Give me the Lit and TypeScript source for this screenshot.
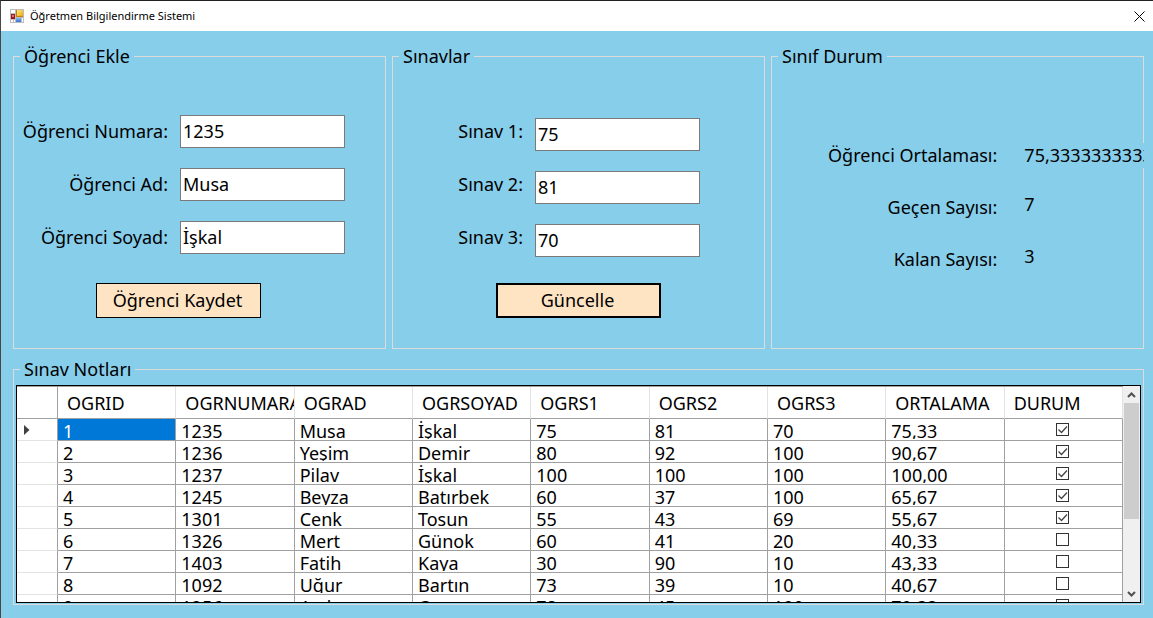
import { LitElement, html, css, svg } from "lit";
import { customElement, property } from "lit/decorators.js";
import { classMap } from "lit/directives/class-map.js";

interface Student {
  id: number;
  no: string;
  ad: string;
  soyad: string;
  s1: number;
  s2: number;
  s3: number;
  ort: string;
  durum: boolean;
}

const student = (
  id: number, no: string, ad: string, soyad: string,
  s1: number, s2: number, s3: number, ort: string, durum: boolean
): Student => ({ id, no, ad, soyad, s1, s2, s3, ort, durum });

const STUDENTS: Student[] = [
  student(1, "1235", "Musa", "İşkal", 75, 81, 70, "75,33", true),
  student(2, "1236", "Yeşim", "Demir", 80, 92, 100, "90,67", true),
  student(3, "1237", "Pilav", "İşkal", 100, 100, 100, "100,00", true),
  student(4, "1245", "Beyza", "Batırbek", 60, 37, 100, "65,67", true),
  student(5, "1301", "Cenk", "Tosun", 55, 43, 69, "55,67", true),
  student(6, "1326", "Mert", "Günok", 60, 41, 20, "40,33", false),
  student(7, "1403", "Fatih", "Kaya", 30, 90, 10, "43,33", false),
  student(8, "1092", "Uğur", "Bartın", 73, 39, 10, "40,67", false),
  student(9, "1256", "Aydan", "Can", 78, 45, 100, "70,33", true),
];

const HEADERS = ["OGRID", "OGRNUMARA", "OGRAD", "OGRSOYAD", "OGRS1", "OGRS2", "OGRS3", "ORTALAMA", "DURUM"];

@customElement("title-bar")
export class TitleBar extends LitElement {
  @property() heading = "";

  static styles = css`
    :host {
      display: flex;
      align-items: center;
      gap: 6px;
      height: 30px;
      padding-left: 9px;
      background: #fff;
      font-size: 11px;
      flex: none;
    }
    .name { flex: 1; margin: 0; font: inherit; line-height: 16px; }
    .close {
      width: 27px;
      height: 28px;
      padding: 0;
      border: 0;
      background: none;
      display: grid;
      place-items: center;
    }
    svg { display: block; }
  `;

  render() {
    return html`
      <svg width="14" height="14" viewBox="0 0 14 14" aria-hidden="true">
        <defs>
          <linearGradient id="y" x1="0" y1="0" x2="1" y2="1">
            <stop offset="0" stop-color="#ffe98a" /><stop offset="1" stop-color="#eea800" />
          </linearGradient>
          <linearGradient id="b" x1="0" y1="0" x2="0" y2="1">
            <stop offset="0" stop-color="#8ab8f4" /><stop offset="1" stop-color="#2f6fd6" />
          </linearGradient>
        </defs>
        <rect width="14" height="14" fill="#bdbdbd" />
        <path fill="#fff" d="M1 1h4v3H1zM1 11h2v2H1zM4 11h1v2H4zM12 9h1v4h-1z" />
        <rect x="1" y="5" width="4" height="5" fill="#9c1c1c" />
        <rect x="2" y="6" width="2" height="2" fill="#e07070" />
        <rect x="6" y="1" width="7" height="7" fill="#b98310" />
        <rect x="7" y="1" width="6" height="6" fill="url(#y)" />
        <rect x="6" y="9" width="5" height="4" fill="url(#b)" />
      </svg>
      <h1 class="name">${this.heading}</h1>
      <button class="close" aria-label="Kapat">
        <svg width="11" height="11" viewBox="0 0 11 11">
          <path d="M.5 .5l10 10M10.5 .5l-10 10" stroke="#000" stroke-width="1" fill="none" />
        </svg>
      </button>
    `;
  }
}

@customElement("grade-grid")
export class GradeGrid extends LitElement {
  @property({ attribute: false }) rows: Student[] = [];

  static styles = css`
    :host {
      display: flex;
      min-width: 0;
      min-height: 0;
      border: 1px solid #000;
      background: #fff;
      overflow: hidden;
    }
    .view {
      flex: 1;
      min-width: 0;
      overflow: hidden;
      border-top: 1px solid #a0a0a0;
    }
    table {
      width: 100%;
      table-layout: fixed;
      border-collapse: separate;
      border-spacing: 0;
    }
    .rowhead { width: 41px; }
    th, td {
      padding: 0;
      font-weight: 400;
      text-align: left;
      vertical-align: top;
      border-right: 1px solid #a0a0a0;
      border-bottom: 1px solid #a0a0a0;
    }
    thead th { border-right-color: #e3e3e3; }
    thead .corner { border-right-color: #a0a0a0; }
    tbody th { border-bottom-color: #e3e3e3; }
    .caption {
      height: 31px;
      line-height: 32px;
      padding-left: 9px;
      overflow: hidden;
      white-space: nowrap;
    }
    td { height: 21px; }
    .cell {
      height: 20px;
      line-height: 25px;
      padding-left: 5px;
      overflow: hidden;
      white-space: nowrap;
    }
    .selected { background: #0078d7; background-clip: padding-box; color: #fff; }
    .marker { display: block; margin: 6px 0 0 7px; }
    .tick {
      display: grid;
      width: 13px;
      height: 13px;
      margin: 4px auto 0;
    }
    .tick > * { grid-area: 1 / 1; }
    .tick input {
      appearance: none;
      width: 13px;
      height: 13px;
      margin: 0;
      border: 1px solid #333;
      background: #fff;
    }
    .tick svg { pointer-events: none; }
    .box { height: 21px; padding-right: 2px; overflow: hidden; }
    .scroll {
      flex: none;
      display: flex;
      flex-direction: column;
      width: 17px;
      background: #f0f0f0;
    }
    .scroll button {
      height: 17px;
      padding: 0;
      border: 0;
      background: none;
      display: grid;
      place-items: center;
    }
    .track { flex: 1; padding: 0 1px; }
    .thumb { height: 64%; background: #cdcdcd; }
  `;

  private cell(value: string | number, selected = false) {
    return html`<td class=${classMap({ selected })}><div class="cell">${value}</div></td>`;
  }

  render() {
    return html`
      <div class="view">
        <table>
          <colgroup>
            <col class="rowhead" />
            ${HEADERS.map(() => html`<col />`)}
          </colgroup>
          <thead>
            <tr>
              <th class="corner"></th>
              ${HEADERS.map((h) => html`<th scope="col"><div class="caption">${h}</div></th>`)}
            </tr>
          </thead>
          <tbody>
            ${this.rows.map((r, i) => html`
              <tr>
                <th scope="row" aria-label=${r.ad}>
                  ${i === 0
                    ? html`<svg class="marker" width="6" height="10" viewBox="0 0 6 10"><path d="M0 0l5.500 5L0 10z" fill="#404040" /></svg>`
                    : ""}
                </th>
                ${this.cell(r.id, i === 0)}
                ${[r.no, r.ad, r.soyad, r.s1, r.s2, r.s3, r.ort].map((v) => this.cell(v))}
                <td>
                  <div class="box">
                    <label class="tick">
                      <input type="checkbox" aria-label="DURUM ${r.no}" .checked=${r.durum} />
                      ${r.durum
                        ? svg`<svg width="13" height="13" viewBox="0 0 13 13"><path d="M2.500 6.500l3 3 5.500-6" fill="none" stroke="#444" stroke-width="1.300" /></svg>`
                        : ""}
                    </label>
                  </div>
                </td>
              </tr>
            `)}
          </tbody>
        </table>
      </div>
      <div class="scroll">
        <button aria-label="Yukarı">
          <svg width="9" height="6" viewBox="0 0 9 6"><path d="M1 5l3.500-3.500L8 5" fill="none" stroke="#505050" stroke-width="2" /></svg>
        </button>
        <div class="track"><div class="thumb"></div></div>
        <button aria-label="Aşağı">
          <svg width="9" height="6" viewBox="0 0 9 6"><path d="M1 1l3.500 3.500L8 1" fill="none" stroke="#505050" stroke-width="2" /></svg>
        </button>
      </div>
    `;
  }
}

@customElement("app-root")
export class AppRoot extends LitElement {
  static styles = css`
    * { box-sizing: border-box; }
    :host {
      display: flex;
      flex-direction: column;
      box-sizing: border-box;
      height: 100vh;
      border-top: 1px solid #231f20;
      border-left: 1px solid #4a4645;
      background: #87ceeb;
      color: #000;
      font-family: "Noto Sans", "Open Sans", sans-serif;
      font-size: 18px;
      line-height: 25px;
    }
    main {
      flex: 1;
      min-height: 0;
      display: flex;
      flex-direction: column;
      gap: 8px;
      padding: 13px 9px 13px 12px;
    }
    .groups {
      display: grid;
      grid-template-columns: repeat(3, minmax(0, 1fr));
      gap: 6px;
    }
    fieldset {
      min-width: 0;
      margin: 0;
      padding: 0;
      border: 1px solid #dcdcdc;
    }
    legend { margin-left: 6px; padding: 0 4px; line-height: 24px; }
    .group { padding-bottom: 30px; }
    .notes {
      flex: 1;
      min-height: 0;
      display: flex;
      padding: 4px 2px 1px;
    }
    .notes legend { margin-left: 4px; }
    grade-grid { flex: 1; }
    .fields {
      display: grid;
      column-gap: 12px;
      row-gap: 20px;
      align-items: start;
    }
    .fields label { text-align: right; white-space: nowrap; }
    .student { grid-template-columns: 154fr 165fr; padding: 47px 40px 0 0; }
    .student label { line-height: 33px; }
    .exams { grid-template-columns: 130fr 165fr; padding: 50px 64px 0 0; }
    .exams label { line-height: 27px; }
    input {
      width: 100%;
      min-width: 0;
      height: 33px;
      margin: 0;
      padding: 0 2px 2px;
      border: 1px solid #7a7a7a;
      border-radius: 0;
      background: #fff;
      color: #000;
      font: inherit;
    }
    .action {
      display: block;
      width: 165px;
      height: 35px;
      padding: 0 2px 0 0;
      border: 1px solid #000;
      background: #ffe4c4;
      color: #000;
      font: inherit;
    }
    .save { margin: 29px 0 0 82px; }
    .update { margin: 26px 0 0 103px; border-width: 2px; }
    .stats {
      display: grid;
      grid-template-columns: 226fr 120fr;
      gap: 27px;
      align-items: start;
      margin: 0 -1px 0 0;
      padding-top: 75px;
    }
    .stats dt { text-align: right; white-space: nowrap; }
    .stats dd { margin: 0; line-height: 19px; }
    .stats .average {
      line-height: 25px;
      overflow: hidden;
      white-space: nowrap;
      background: #87ceeb;
    }
  `;

  private field(id: string, label: string, value: string) {
    return html`<label for=${id}>${label}</label><input id=${id} type="text" .value=${value} />`;
  }

  render() {
    return html`
      <title-bar heading="Öğretmen Bilgilendirme Sistemi"></title-bar>
      <main>
        <div class="groups">
          <fieldset class="group">
            <legend>Öğrenci Ekle</legend>
            <div class="fields student">
              ${this.field("numara", "Öğrenci Numara:", "1235")}
              ${this.field("ad", "Öğrenci Ad:", "Musa")}
              ${this.field("soyad", "Öğrenci Soyad:", "İşkal")}
            </div>
            <button class="action save">Öğrenci Kaydet</button>
          </fieldset>
          <fieldset class="group">
            <legend>Sınavlar</legend>
            <div class="fields exams">
              ${this.field("sinav1", "Sınav 1:", "75")}
              ${this.field("sinav2", "Sınav 2:", "81")}
              ${this.field("sinav3", "Sınav 3:", "70")}
            </div>
            <button class="action update">Güncelle</button>
          </fieldset>
          <fieldset class="group">
            <legend>Sınıf Durum</legend>
            <dl class="stats">
              <dt>Öğrenci Ortalaması:</dt><dd class="average">75,3333333333333</dd>
              <dt>Geçen Sayısı:</dt><dd>7</dd>
              <dt>Kalan Sayısı:</dt><dd>3</dd>
            </dl>
          </fieldset>
        </div>
        <fieldset class="notes">
          <legend>Sınav Notları</legend>
          <grade-grid .rows=${STUDENTS}></grade-grid>
        </fieldset>
      </main>
    `;
  }
}
